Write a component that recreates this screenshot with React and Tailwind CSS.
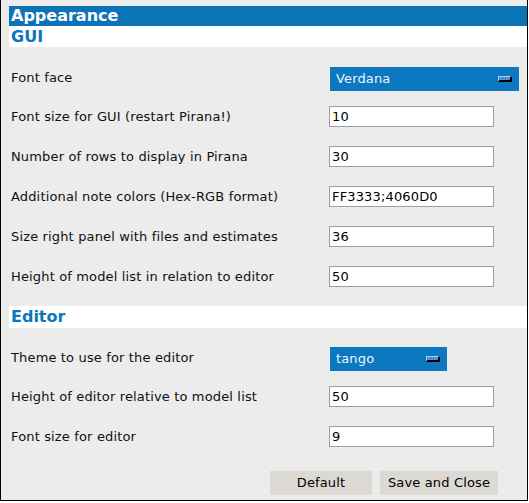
import React from "react";

const guiRows = [
    { label: "Font size for GUI (restart Pirana!)", value: "10" },
    { label: "Number of rows to display in Pirana", value: "30" },
    { label: "Additional note colors (Hex-RGB format)", value: "FF3333;4060D0" },
    { label: "Size right panel with files and estimates", value: "36" },
    { label: "Height of model list in relation to editor", value: "50" },
];

const editorRows = [
    { label: "Height of editor relative to model list", value: "50" },
    { label: "Font size for editor", value: "9" },
];

function SectionBar({ title, first }) {
    return (
        <div className={`ml-[8px] bg-white pl-[2px] text-[16px] font-bold text-[#0b76bc] ${first ? "h-[21px] leading-[21px]" : "mt-[19px] h-[22px] leading-[22px]"}`}>
            {title}
        </div>
    );
}

function DropRow({ label, value, width, className = "" }) {
    return (
        <div className={`flex items-center h-[24px] pl-[10px] ${className}`}>
            <div className="w-[319px] -mt-[3px] text-[13px] tracking-[0.15px] text-[#111]">{label}</div>
            <div className={`flex items-center justify-between h-[24px] bg-[#0b78c0] pl-[6px] pr-[7px] text-[13px] tracking-[0.15px] text-[#eef4ff] ${width}`}>
                <span>{value}</span>
                <span className="block w-[14px] h-[6px] bg-[#4b8fd6] border-t border-l border-[#a9d0f5] border-b-2 border-r-2 border-b-black border-r-black" />
            </div>
        </div>
    );
}

function InputRow({ label, value, className = "" }) {
    return (
        <div className={`flex items-center h-[21px] pl-[10px] ${className}`}>
            <div className="w-[318px] text-[13px] tracking-[0.15px] text-[#111]">{label}</div>
            <input
                type="text"
                readOnly
                value={value}
                className="w-[165px] h-[21px] border border-[#9e9e9e] bg-white px-[2px] text-[13px] tracking-[0.15px] text-black outline-none"
            />
        </div>
    );
}

export default function App() {
    return (
        <div className="w-[529px] h-[503px] bg-white" style={{ fontFamily: '"DejaVu Sans", Verdana, sans-serif' }}>
            <div className="w-[528px] h-[501px] bg-[#ececec] border-l border-r border-b border-black pt-[6px] flex flex-col">
                {/* Appearance */}
                <div className="ml-[8px] h-[20px] bg-[#0b73b6] pl-[2px] text-[16px] leading-[20px] font-bold text-white">
                    Appearance
                </div>
                <SectionBar title="GUI" first />

                <DropRow label="Font face" value="Verdana" width="w-[189px]" className="mt-[20px]" />
                {guiRows.map((row, i) => (
                    <InputRow key={row.label} label={row.label} value={row.value} className={i === 0 ? "mt-[15px]" : "mt-[19px]"} />
                ))}

                {/* Editor */}
                <SectionBar title="Editor" />
                <DropRow label="Theme to use for the editor" value="tango" width="w-[117px]" className="mt-[19px]" />
                {editorRows.map((row, i) => (
                    <InputRow key={row.label} label={row.label} value={row.value} className={i === 0 ? "mt-[15px]" : "mt-[19px]"} />
                ))}

                <div className="flex gap-[8px] pl-[269px] mt-[24px]">
                    <button className="w-[102px] h-[24px] bg-[#dcd9d4] text-[13px] tracking-[0.15px] text-black">Default</button>
                    <button className="w-[118px] h-[24px] bg-[#dcd9d4] text-[13px] tracking-[0.15px] text-black">Save and Close</button>
                </div>
            </div>
        </div>
    );
}
